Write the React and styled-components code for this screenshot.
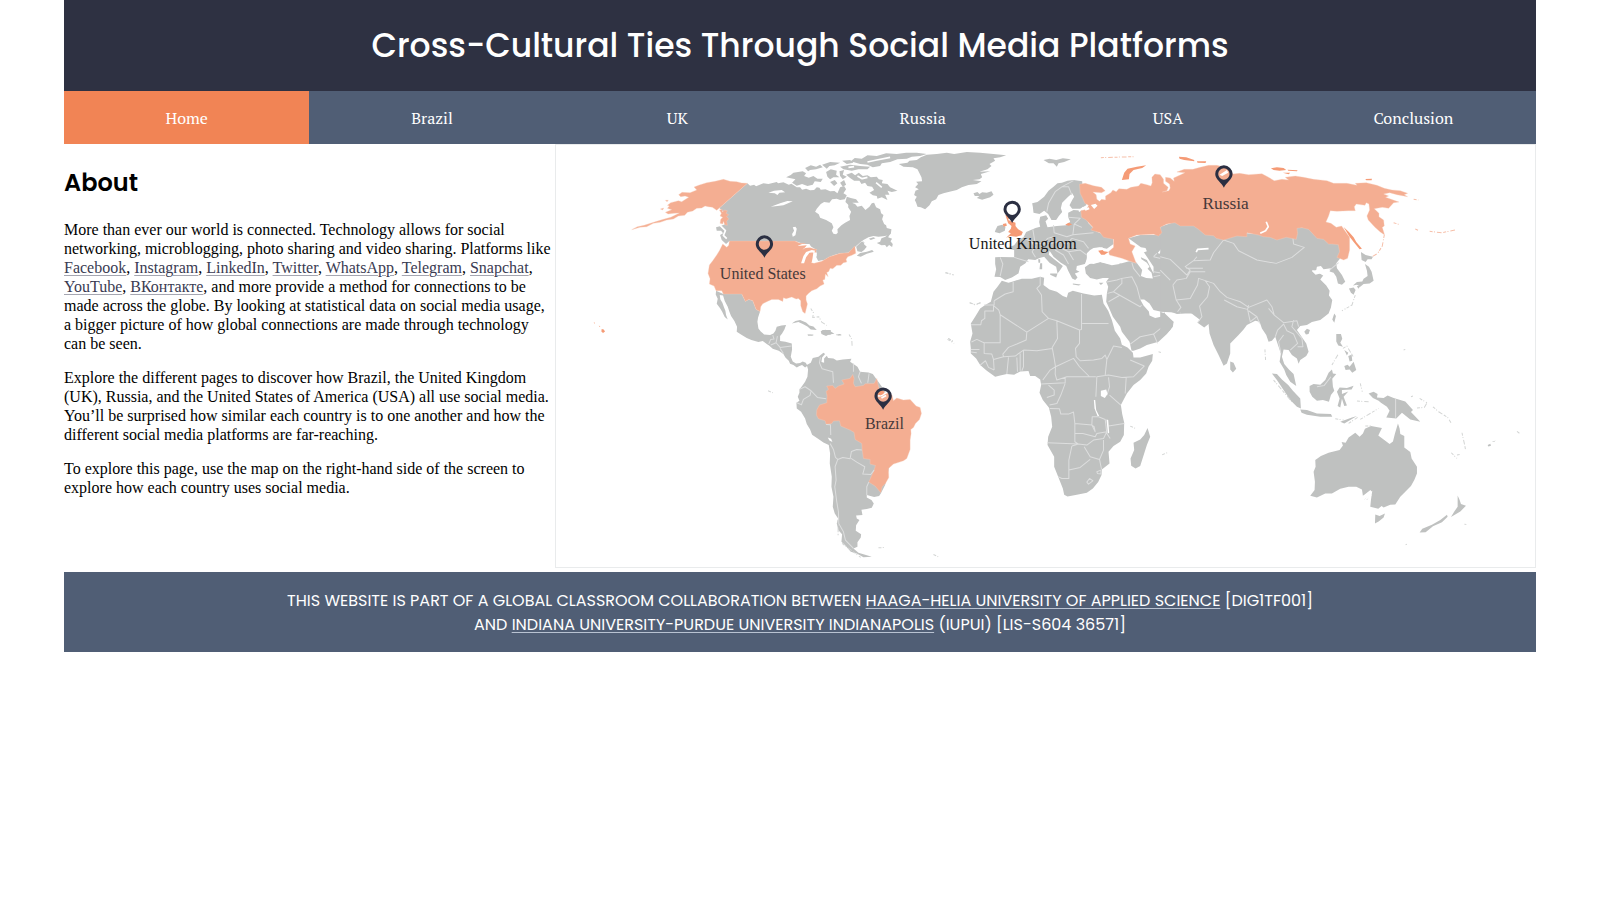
import React from "react";
import styled, { createGlobalStyle } from "styled-components";

const GlobalStyle = createGlobalStyle`
  *, *::before, *::after { box-sizing: border-box; }
  body {
    margin: 0;
    background: #ffffff;
    color: #000000;
    font-family: "Liberation Serif", "Times New Roman", serif;
    font-size: 16px;
  }
`;

const display = `Poppins, Inter, "Open Sans", sans-serif`;

const Page = styled.div`
  width: 92%;
  margin: 0 auto;
`;

const Header = styled.header`
  background: #2e3142;
  color: #ffffff;
  padding: 21px 16px 20px;
  text-align: center;
`;

const Title = styled.h1`
  margin: 0;
  font-family: ${display};
  font-size: 33px;
  font-weight: 500;
  line-height: 50px;
`;

const Nav = styled.nav`
  display: grid;
  grid-template-columns: repeat(6, 1fr);
  background: #505e75;
`;

const NavLink = styled.a`
  padding: 17px 8px 15px;
  background: ${(p) => (p.$active ? "#f18455" : "transparent")};
  color: #ffffff;
  font-family: "PT Serif", "Noto Serif", "Liberation Serif", serif;
  font-size: 16px;
  line-height: 21px;
  text-align: center;
  text-decoration: none;
`;

const Main = styled.main`
  display: grid;
  grid-template-columns: 1fr 2fr;
  padding-bottom: 4px;
`;

const About = styled.section`
  padding: 20px 4px 0 0;
`;

const Heading = styled.h2`
  margin: 0 0 18px;
  font-family: ${display};
  font-size: 24px;
  font-weight: 600;
  line-height: 38px;
`;

const Paragraph = styled.p`
  margin: 0 0 15px;
  line-height: 19px;
`;

const TextLink = styled.a`
  color: ${(p) => (p.$light ? "#ffffff" : "#3a3b52")};
  text-decoration: underline;
  text-decoration-color: ${(p) => (p.$light ? "#b9c3d2" : "#a5a6b1")};
  text-decoration-thickness: 1px;
  text-underline-offset: 2px;
`;

const MapFrame = styled.div`
  border: 1px solid #e9ebec;
`;

const MapSvg = styled.svg`
  display: block;
  width: 100%;
  height: auto;
`;

const Land = styled.path`
  fill: #bfc1c0;
`;

const Featured = styled.path`
  fill: ${(p) => (p.$strong ? "#f59b76" : "#f4ae92")};
  stroke: ${(p) => (p.$strong ? "none" : "#f8cdbc")};
  stroke-width: 1;
`;

const Water = styled.path`
  fill: #ffffff;
`;

const Border = styled.path`
  fill: none;
  stroke: #dddede;
  stroke-width: 3;
  stroke-linejoin: round;
`;

const Isles = styled.path`
  fill: none;
  stroke: ${(p) => (p.$orange ? "#f6bfa9" : "#d3d5d4")};
  stroke-width: 3;
  stroke-dasharray: 9 4 3 6 14 5;
`;

const Inlet = styled.path`
  fill: none;
  stroke: #ffffff;
  stroke-width: 5;
  stroke-linejoin: round;
`;

const PinShape = styled.path`
  fill: #2b2f42;
  fill-rule: evenodd;
`;

const PinLabel = styled.text`
  fill: ${(p) => (p.$dark ? "#161616" : "#46393a")};
  font-family: "Liberation Serif", "Times New Roman", serif;
  font-size: ${(p) => (p.$large ? "52px" : "48px")};
  text-anchor: middle;
`;

const Footer = styled.footer`
  background: #505e75;
  color: #ffffff;
  padding: 17px 16px 15px;
  font-family: ${display};
  font-size: 16px;
  line-height: 24px;
  text-align: center;
  text-transform: uppercase;
`;

function Pin({ x, y, labelX, labelY, name, dark, large }) {
  return (
    <a href={"#" + name.toLowerCase().replace(" ", "-")}>
      <PinShape
        transform={`translate(${x} ${y})`}
        d="M0 0C-6 -15 -26 -24 -26 -41A26 26 0 0 1 26 -41C26 -24 6 -15 0 0ZM-17 -41A17 17 0 1 0 17 -41A17 17 0 1 0 -17 -41Z"
      />
      <PinLabel x={labelX} y={labelY} $dark={dark} $large={large}>{name}</PinLabel>
    </a>
  );
}

function NorthAmerica() {
  return (
    <g transform="translate(-15 -12)">
      <Land d="M592 130L600 137 612 134 618 139 640 130 655 132 680 126 684 130 700 127 716 134 724 131 740 142 750 142 756 149 768 146 780 151 792 150 800 142 808 143 812 149 826 148 840 154 853 153 862 160 870 142 882 138 888 148 880 160 890 166 884 178 870 180 860 176 846 178 838 188 822 186 812 192 800 206 795 215 806 223 810 233 828 240 845 250 850 262 845 272 850 281 858 283 863 278 862 268 874 256 885 248 900 240 898 228 903 215 894 202 895 192 905 188 915 192 922 200 935 197 946 210 958 200 965 190 972 188 978 202 990 208 993 220 1000 225 996 238 1002 252 1008 256 1010 264 1024 268 1022 282 1005 288 985 290 970 288 955 292 940 300 929 308 918 318 905 330 895 338 870 340 852 345 836 352 822 360 805 362 797 352 800 330 780 318 760 312 735 303 538 303 528 312 515 300 510 285 519 280 513 272 500 272 498 262 512 258 526 252 518 240 530 232 520 215 508 204Z" />
      <Land d="M918 320L932 307 946 302 941 312 950 320 942 330 934 336 922 334ZM920 347L930 339 950 335 966 330 971 335 950 341 932 350ZM980 309L990 305 994 295 1006 290 1015 279 1020 282 1014 292 1026 296 1021 304 1028 312 1026 321 1017 315 1010 322 1005 315 994 316ZM956 296l14 -4 6 3 -14 5z" />
      <Land d="M498 452L520 462 575 462 586 484 596 478 608 482 618 508 630 514 624 532 622 545 625 565 632 574 642 583 660 585 670 580 676 572 680 560 694 556 708 555 703 568 696 580 690 588 690 603 706 605 725 610 726 628 722 650 728 664 738 670 750 669 758 664 767 668 772 677 765 682 756 675 748 678 740 682 730 675 720 671 716 662 706 652 700 642 686 632 668 626 657 616 650 612 638 603 625 606 604 600 590 594 574 584 560 575 561 560 553 543 543 528 538 515 533 500 524 483 519 466 509 465 511 478 517 488 522 502 526 512 528 525 533 538 524 531 516 514 509 503 500 491 503 476 497 463Z" />
      <Land d="M725 550L736 543 750 540 768 547 778 556 790 559 800 570 782 568 772 559 758 552 745 546ZM812 573L826 569 842 574 853 581 836 583 828 588 814 582ZM772 583h16v4h-14zM862 582h10v4h-9z" />
      <Border d="M656 612L662 598 672 597 668 585M662 615L678 608 682 588M678 608L690 622 724 618M690 625L700 640" />
      <Isles d="M782 505L790 518 788 532 806 530 815 546 830 556M897 583L905 598 906 618" />
      <Featured d="M592 130L508 204 500 211 487 202 474 200 465 198 455 204 440 205 428 213 412 217 404 226 385 228 370 237 350 240 330 247 310 250 290 260 270 262 245 269 262 260 282 256 320 244 340 238 362 232 388 219 372 220 354 222 346 217 365 209 352 205 358 198 352 196 362 188 385 182 395 185 416 172 405 168 392 170 386 164 396 157 420 158 440 150 432 141 448 135 470 128 495 124 520 118 540 124 560 125 575 129Z" />
      <Featured d="M508 210l8 -2 2 8 4 -6 10 2 -4 8 8 4 -6 6 6 6 -6 8 2 12 -8 -2 -4 -10 -2 8 -8 -2 2 -12 6 -6 -8 -4 4 -8z" />
      <Featured d="M331 207l10 -3 -3 6zM346 181l9 0 -4 4z" />
      <Featured $strong d="M155 567l6 1 4 6 -6 5 -5 -5zM146 556l5 3 -2 2zM131 547l4 1 -2 3z" />
      <Featured d="M538 303H735L748 309 762 310 776 316 766 322 758 328 770 322 778 322 790 326 800 328 798 340 792 350 784 368 792 370 815 364 838 350 852 346 870 340 895 338 905 328 914 318 917 340 905 346 893 350 888 358 890 366 880 368 872 376 860 376 848 386 840 385 836 394 830 397 834 410 826 402 824 418 818 420 822 432 810 438 800 446 785 452 775 460 768 468 768 480 772 492 768 508 765 520 758 515 752 497 752 482 745 475 738 477 725 471 708 476 700 473 698 484 685 478 665 478 650 485 638 491 632 500 630 514 618 508 608 482 596 478 586 484 575 462 520 462 515 452 498 452 492 438 478 432 480 416 474 400 478 375 488 362 500 345 508 332 518 312 530 322 536 316Z" />
      <Water d="M753 370L760 348 768 336 785 330 796 332 792 337 778 338 768 352 762 370ZM790 336L800 338 800 348 808 352 800 364 790 368 786 364ZM742 318L756 312 778 312 784 322 764 324 770 316Z" />
      <Land d="M797 330L816 336 826 352 812 360 804 362 798 350 804 346Z" />
      <Water d="M655 158L672 152 695 150 705 157 688 158 682 165 674 160ZM662 200L690 190 712 183 728 184 700 196 682 198ZM728 262L736 260 740 266 736 286 728 290 726 282 732 272Z" />
      <Inlet d="M508 254L526 272 520 286 530 296M940 306L955 302 975 305 960 318" />
    </g>
  );
}

function ArcticAndAtlantic() {
  return (
    <g transform="translate(675 -12)">
      <Land d="M18 112L32 105 40 98 68 94 78 100 72 108 86 113 100 108 112 116 128 116 122 126 104 124 98 134 82 138 66 132 50 137 36 128 46 118ZM75 84L92 76 108 80 120 74 128 82 108 88 90 90 84 94ZM126 74L150 66 180 68 164 76 148 78 140 86ZM138 96L152 88 170 92 168 104 178 112 160 112 150 118 142 110ZM178 94L192 90 188 104 200 110 188 118 180 108ZM186 62L210 60 220 68 200 72ZM180 80L210 74 240 78 270 80 262 88 235 88 215 92 190 88ZM212 64L224 54 245 56 262 46 290 48 318 40 350 42 378 38 410 38 440 42 420 48 395 50 380 56 352 58 330 66 305 70 300 78 278 82 262 74 240 72Z" />
      <Land d="M198 104L215 98 225 106 236 98 248 108 262 106 272 112 290 110 296 118 308 120 305 130 322 132 330 142 352 152 335 156 322 152 328 164 315 164 322 180 305 172 292 176 290 168 278 166 268 158 282 150 276 140 262 138 255 128 244 132 238 122 222 122 210 114ZM200 170L212 174 228 178 236 188 218 188 206 196 196 186ZM150 126L164 120 172 130 162 138ZM180 128L192 120 198 134 188 140Z" />
      <Inlet d="M232 108L246 116 262 112M262 66L290 60 330 52M288 128L305 142M205 82L222 80" />
      <Land d="M356 72L382 68 388 62 410 60 422 52 440 44 470 42 500 38 522 42 560 36 600 38 640 42 678 46 660 52 640 55 645 62 628 72 634 78 622 88 598 95 630 94 602 102 606 112 598 118 578 120 604 124 590 132 565 135 545 142 530 150 508 155 490 160 475 165 468 178 455 184 448 196 435 208 422 202 412 200 408 188 404 180 410 170 402 165 406 152 416 148 405 142 414 132 408 125 426 124 424 112 418 100 412 88 398 82 370 80Z" />
      <Land d="M580 160L592 156 598 162 606 157 620 158 634 154 640 164 630 172 606 179 590 174 598 168 584 168Z" />
      <Isles d="M497 397L520 405M570 488L584 494 600 488M505 595L520 608" />
    </g>
  );
}

function SouthAmerica() {
  return (
    <g transform="translate(405 558)">
      <Land d="M350 105L362 98 368 84 385 80 400 68 405 72 396 82 394 96 402 98 402 85 410 77 414 84 430 85 440 91 458 88 484 86 480 95 490 102 502 110 510 125 535 127 548 132 556 143 640 260 600 400 585 465 572 490 567 498 552 501 530 495 530 502 544 510 551 520 545 533 530 537 514 539 517 555 498 556 500 565 508 570 498 585 497 602 513 612 512 622 502 636 502 650 490 655 505 668 525 674 545 680 520 681 500 670 482 665 465 645 454 635 456 612 445 600 440 580 444 565 434 550 428 530 430 500 424 470 425 440 419 400 420 370 416 345 400 337 385 327 366 314 360 298 350 282 345 265 333 245 320 235 319 218 328 212 323 200 328 188 328 178 336 168 345 155 352 140 354 118Z" />
      <Featured d="M560 145L552 160 525 161 520 166 495 170 490 160 492 145 488 133 480 145 455 150 462 162 445 168 435 175 428 166 410 168 415 178 408 184 411 198 410 218 388 225 380 240 379 255 385 266 405 272 408 283 425 280 430 273 448 272 452 288 480 300 492 307 495 328 515 340 516 358 520 385 540 388 540 402 556 406 552 420 536 456 555 468 572 488 576 470 586 460 596 442 595 415 610 402 640 392 650 385 660 358 660 330 663 310 662 298 670 292 676 280 688 268 694 250 690 232 678 228 660 208 640 210 620 204 610 212 606 196 598 188 570 185 564 164Z" />
      <Border d="M391 82L388 98 396 116 428 125 430 158M328 178L345 170 363 182 360 196 340 208 334 224 320 218M363 182L382 202 408 206M408 283L421 284 422 315M420 340L430 358 436 382 443 388 458 382 480 386 484 364 500 358 515 360M443 388L435 410 438 450 434 470 440 515 445 545 446 580 460 605 466 630 490 655M483 385L500 396 524 410 518 432 542 433 552 420M536 456L530 470 530 495M490 100L490 125M510 125L505 140 514 160M537 130L533 158" />
      <Water d="M413 322l10 4 4 10 -9 -5z" />
      <Inlet d="M564 198L574 196 584 190 596 184M574 204L588 196" />
      <Featured $strong d="M566 187l8 -7 8 4 -2 8 -10 4 -6 -4z" />
      <Isles d="M565 653L586 652M730 673L748 682M234 182L248 188M354 14L372 15M438 14L454 15M444 570L444 615M456 640L512 682" />
      <Land d="M396 0h26v14h-22z" />
    </g>
  );
}

function Africa() {
  return (
    <g transform="translate(1155 378)">
      <Land d="M185 32L205 38 218 34 245 26 275 26 300 20 312 23 310 45 328 58 350 65 368 78 380 82 384 68 398 62 430 70 462 76 485 74 490 100 504 122 515 150 524 182 540 205 545 224 562 232 578 248 580 262 600 262 638 252 636 272 625 290 618 310 600 330 580 345 560 370 542 405 546 432 552 458 551 495 540 515 520 528 505 545 508 580 485 598 484 615 474 636 458 655 440 668 410 674 382 679 372 674 368 655 354 620 342 590 342 560 322 525 324 500 336 470 333 440 326 412 308 390 298 368 303 345 300 328 285 318 270 318 265 303 240 304 222 314 200 312 180 316 165 320 140 302 120 285 108 265 92 250 92 235 90 215 97 190 92 160 105 140 120 115 135 105 152 95 160 65 172 50Z" />
      <Land d="M622 474L630 500 620 525 600 588 586 595 573 587 571 565 582 540 580 518 600 508 612 495Z" />
      <Border d="M219 36L219 65 195 72 162 92M162 92V105H132M162 108H160V123H134V145L124 152 122 164H92M162 108L176 120 180 134 260 186 325 145 350 152 418 180 424 178V72M180 134V218H132L125 215 110 208 94 216M300 20V45L290 55 304 75 306 125 325 145M426 160H505M260 186L258 210 230 222 205 232 188 252 190 260 160 268M350 152L352 205 336 232 342 265 346 290M418 180L418 220 406 235 408 260 420 272 460 270 485 265 495 255 500 268 520 228 545 232M250 240L290 242 336 235M250 240L250 290 245 302M240 250L240 302M230 262L232 305M205 262L200 312M160 268L162 300M120 285L136 272 145 292 162 300M92 238H118M92 246L110 248M132 218L132 250 155 252 160 268M190 260L225 258 250 240M346 290L330 300 308 330M346 290L400 265 418 290 448 320 380 320 350 330 345 312 346 290M303 342L375 338 375 320M325 345L342 360 342 375 320 382M375 340L362 375 350 400 328 405M328 415L358 416 362 432 385 432 400 426 404 460 455 465 465 485 462 470 455 465 456 440 475 440M404 460L404 515 415 522 322 518M395 528L386 570 386 625 365 625 354 620M415 522L395 528M415 522L440 525 460 510 490 505 500 485 470 490 465 500 428 490 404 490M432 530L450 560 478 568 490 540 490 510M386 600L420 592 450 568M478 568L484 598M475 440L495 448 500 490 510 505M505 468L552 460M467 380L470 320 505 315 545 322 580 320 612 288 570 270M467 320L448 320M500 268L495 315M558 322L555 370M505 322L508 350 500 375M508 375L542 405M440 636L448 625 458 632 445 642ZM470 605L482 600 482 612 472 610Z" />
      <Water d="M482 362L498 358 502 372 494 384 482 378ZM461 390L465 390 468 420 477 438 472 438 463 415ZM499 448L504 450 507 488 503 490Z" />
      <Isles d="M24 205L42 215M570 468L588 476M666 554L686 546M655 245L662 247" />
    </g>
  );
}

function Europe() {
  return (
    <g transform="translate(1155 -12)">
      <Land d="M165 352L180 351 222 352 222 330 210 328 195 325 222 316 232 302 250 292 258 276 272 270 286 264 300 260 297 246 300 230 318 226 324 236 316 244 322 262 350 258 378 256 390 245 384 232 384 218 400 210 430 212 445 250 470 275 518 295 520 312 500 326 478 322 460 324 450 330 440 340 440 358 434 372 410 378 408 390 418 395 404 400 412 412 405 420 396 415 384 392 378 378 362 368 340 350 328 332 326 344 345 360 368 378 360 390 352 400 348 380 328 368 312 350 298 354 285 360 264 358 256 370 240 380 235 400 215 412 195 420 180 411 163 410 168 388 165 372Z" />
      <Land d="M278 200L276 190 292 186 312 170 325 152 340 140 352 130 365 128 382 122 400 120 426 124 428 160 440 180 438 196 420 206 396 206 388 196 396 180 402 170 396 160 384 170 366 188 362 205 366 216 356 228 348 240 334 240 324 222 312 212 298 222 280 218Z" />
      <Land d="M310 60L328 56 348 60 368 55 392 58 372 66 355 70 350 80 340 70 326 70ZM166 270L172 258 186 254 196 260 194 272 178 280 164 276ZM300 370h6v18h-8zM330 400l22 0 -4 12 -18 -8zM294 358h6v10h-5zM398 430l24 3 -6 3 -18 -3zM476 428l14 0 -8 7z" />
      <Land d="M434 382L448 372 480 366 510 372 545 370 572 362 590 370 602 352 620 360 640 400 640 380 600 320 565 295 600 285 660 285 665 265 700 250 790 260 790 520 735 520 710 522 690 514 675 512 660 514 640 510 628 490 612 478 600 478 610 496 626 514 628 526 645 534 662 530 672 516 678 530 700 546 698 560 680 582 655 605 620 615 600 625 580 632 574 632 568 605 545 575 540 560 518 530 505 500 498 485 500 460 504 440 498 425 506 414 488 414 470 418 450 414 437 400Z" />
      <Featured $strong d="M196 226L202 220 208 232 204 240 218 245 226 248 226 258 234 268 248 276 244 286 228 290 210 288 198 293 212 280 204 276 212 266 214 258 204 250ZM188 252L198 250 200 257 190 260ZM375 254L385 248 396 253 386 257ZM545 120L552 98 562 86 590 80 618 76 606 84 580 90 568 102 566 118Z" />
      <Isles $orange d="M482 53L580 50" />
      <Border d="M180 352L188 372 180 408M222 352L265 365M250 292L272 305 285 320 276 335 286 352M278 268L285 310 312 312 322 295 340 290M340 255L342 278 380 290 398 284 402 252M285 310L270 305M322 312L355 305 380 312 395 295M395 295L430 305 445 325M355 305L355 320 385 335 400 360M345 330L370 345 385 372M385 335L420 330 440 345M398 284L460 278M402 252L420 235 384 232M402 252L425 262M320 215L325 190 345 155 366 140 385 140 395 165M366 140L400 122M500 426L530 420 545 415 575 410 590 440 600 478M545 415L545 430 520 455 502 460M520 455L600 500 604 495M505 485L540 465M575 368L580 385 600 410M565 362L600 370M640 410L680 402 705 415 750 400 780 395M705 415L695 440 710 480 725 500 720 520M640 395L680 402M570 612L600 590 640 582 668 560 668 535M640 582L652 610M640 350L680 360 720 370 760 385M650 340L640 350" />
      <Water d="M576 328L592 320 616 324 620 334 598 342 604 358 620 368 628 380 622 386 634 398 638 415 618 414 602 408 606 390 592 372 580 350ZM438 366L442 345 454 334 470 324 486 322 500 334 515 350 536 362 538 372 515 376 480 366 460 372Z" />
      <Featured $strong d="M474 332l13 -2 4 4 14 2 -12 8 -10 0z" />
      <Inlet d="M655 340L665 328 675 332M416 214L430 202" />
      <Isles d="M15 398L40 404M88 488L106 494 122 488M22 598L42 610" />
    </g>
  );
}

function Asia() {
  return (
    <g transform="translate(1815 228)">
      <Land d="M0 20L60 0 130 30 190 50 260 40 400 50 405 20 445 25 500 60 540 75 540 115 528 130 530 145 545 165 555 185 545 194 533 190 528 170 520 158 508 154 512 145 490 148 482 138 470 140 468 150 456 154 466 164 480 160 490 165 480 178 498 196 508 212 506 226 516 240 512 262 505 280 480 300 455 306 440 315 420 318 410 330 424 350 438 370 445 395 438 408 420 420 415 431 410 415 395 405 385 390 370 388 365 410 372 432 386 448 400 462 408 498 390 485 378 465 372 448 358 425 362 400 355 380 345 350 335 362 325 365 318 345 305 325 298 305 285 302 260 315 250 328 235 345 210 370 210 400 200 430 190 437 175 405 160 375 148 340 145 312 132 322 112 308 120 300 100 285 88 275 60 278 0 275Z" />
      <Land d="M0 275L14 280 40 305 30 330 0 355ZM210 424L220 428 228 446 218 457 210 448ZM432 335l8 -9 9 4 -4 12 -8 1zM522 280L527 288 522 308 516 298ZM602 96L616 105 638 110 634 118 622 118 616 126 604 120ZM614 132L626 140 634 155 640 182 628 190 610 192 600 200 590 194 578 196 590 186 606 184 610 176 622 168 620 152ZM566 205L580 202 586 210 580 224 572 218ZM590 198l12 -2 -8 10z" />
      <Land d="M528 342L542 342 546 356 540 368 548 380 534 376 528 364ZM552 438L562 434 568 440 580 425 588 450 576 458 568 448 556 450ZM552 390l12 8 -4 8zM564 408l10 -4 2 18 -8 2zM335 460L350 462 365 478 384 495 398 512 420 535 422 565 410 560 390 540 370 510 350 480ZM420 568L440 570 470 580 512 582 516 590 480 590 440 584 424 578ZM448 498L460 492 480 494 495 480 505 458 515 448 518 460 528 462 516 476 518 500 522 512 512 525 506 545 488 540 470 542 456 530 448 515ZM530 515L538 502 560 504 580 497 574 508 545 510 545 522 564 514 550 530 560 556 552 558 545 536 540 562 532 558 538 535ZM540 605L575 592 590 588 570 600 552 610ZM625 520L640 515 652 522 650 532 670 534 682 526 700 534 735 544 758 570 752 576 780 605 750 598 725 578 708 595 678 592 688 572 680 560 662 548 655 542 638 534Z" />
      <Border d="M0 110L30 118 80 165 90 150 75 140 100 122 150 120 160 98 190 60 220 70 235 92 290 120 348 130 395 112 432 82 400 72 398 55M30 180L0 150M38 195L50 180 78 175 90 155 135 155M48 240L38 195M48 240L90 235 112 195 115 175 160 190 180 215 200 232 240 245 265 262 320 240 335 260 342 285 370 308 410 302 415 320M48 240L62 262 52 275M135 182L148 200 142 230 118 258 125 290 112 308M192 240L230 260 262 268 265 255M262 268L270 305 290 290 265 272M290 290L298 310M342 285L325 265M345 350L352 330 370 312 380 332 400 342 412 370 390 390M370 345L355 365 362 400M400 300L395 320 425 355 428 380 412 380M508 150L535 128M470 500L492 496 512 470M706 536V593M78 145L128 145M100 122L110 110" />
      <Inlet d="M108 96L112 88 145 86M302 38L318 28 320 16 312 5M456 152L480 158 492 166" />
      <Isles d="M314 388L316 420M585 225L575 255 545 272M340 480L395 545M515 435L535 400M600 490L606 515M590 543L625 545M525 596L550 600M548 385L560 378 580 412M565 610L592 592M735 388L730 390" />
      <Isles d="M600 598L655 565" />
    </g>
  );
}

function Russia() {
  return (
    <g transform="translate(1875 -12)">
      <Featured d="M-302 133L-285 130 -260 137 -236 142 -225 152 -236 158 -262 156 -252 164 -250 178 -242 184 -236 178 -224 180 -224 168 -208 158 -202 150 -192 155 -184 146 -160 148 -148 142 -125 138 -118 130 -100 134 -88 138 -84 128 -85 112 -76 102 -60 104 -50 118 -50 130 -36 142 -40 152 -54 156 -34 152 -30 144 -32 132 -44 124 -44 112 -30 114 -18 124 -20 114 -2 106 14 98 -10 96 12 88 38 88 60 82 85 76 110 76 128 80 150 88 158 102 178 100 205 104 245 101 262 110 282 122 305 118 325 120 315 112 345 108 370 112 400 118 440 122 460 130 500 130 530 136 525 130 558 128 590 136 612 145 635 150 660 152 682 160 672 164 682 170 650 164 628 158 610 162 625 168 616 172 656 186 640 188 625 205 606 202 582 206 596 220 596 230 610 240 612 258 606 262 613 285 600 276 584 262 564 240 560 228 568 210 566 192 558 188 554 196 528 192 522 200 525 212 505 212 470 214 450 212 445 228 437 246 452 250 468 262 484 258 496 275 508 292 508 330 502 355 490 360 470 352 478 335 474 314 455 312 445 312 430 298 410 295 385 268 365 263 350 265 352 280 348 298 318 292 290 300 270 292 250 290 235 285 200 278 200 290 170 288 130 300 108 295 100 287 75 285 55 268 40 258 0 258 -16 248 -40 252 -60 262 -55 278 -65 288 -80 283 -130 285 -155 295 -150 312 -135 318 -145 335 -132 370 -155 362 -175 355 -212 345 -215 335 -200 322 -200 298 -230 292 -240 278 -268 270 -262 262 -282 240 -296 232 -298 212 -280 208 -275 196 -286 190 -292 176 -300 160Z" />
      <Water d="M-268 195l14 -4 6 6 -10 10zM-286 208l12 -6 2 6 -12 4zM118 104L140 90 144 98 126 108Z" />
      <Featured $strong d="M-4 50L18 52 42 60 42 64 12 60 -2 56ZM50 64L78 64 76 69 52 68ZM272 85L290 82 310 84 318 90 298 92 280 90ZM322 89L352 91 350 94 324 92ZM308 98L330 98 325 103ZM555 117L575 116 574 121 558 121ZM490 261L506 276 520 292 528 306 545 326 538 328 522 308 508 290Z" />
      <Inlet d="M240 280L256 272 264 260 258 245" />
      <Isles $orange d="M612 285L606 318 592 340 576 350M640 248L658 254M705 267L716 272M748 274L785 278 825 270M700 178L714 180" />
    </g>
  );
}

function Oceania() {
  return (
    <g transform="translate(2085 678)">
      <Land d="M443 160L448 175 450 192 462 198 462 232 480 246 484 265 500 290 500 310 492 330 482 348 465 365 450 380 435 403 420 404 400 412 394 408 384 416 360 410 362 390 366 362 350 372 338 378 335 358 318 350 295 350 270 356 245 370 225 370 200 382 180 377 193 360 194 335 190 305 196 290 195 270 212 258 235 248 268 240 278 226 274 216 286 218 295 202 315 188 328 200 338 190 344 176 362 168 395 174 384 196 400 208 418 222 428 214 434 190Z" />
      <Land d="M375 433L388 438 404 430 400 442 385 454 374 460ZM622 376L628 390 632 402 647 407 630 424 602 441 612 424 622 410ZM590 434L592 440 575 456 548 468 526 486 508 487 516 476 545 464 570 450ZM712 225l8 -4 2 6 -8 2zM724 216l12 -5 -4 4zM342 388l16 -10 -8 12z" />
      <Inlet d="M336 382L362 362M344 390L362 374" />
      <Isles d="M603 248L620 265M548 110L565 125 592 142 602 158M635 188L642 220 646 240M800 184L808 190M500 114L522 112 530 98M508 85L530 98M620 255L628 253M642 462L648 463M345 168L366 167M466 524L470 522M482 80L488 78" />
    </g>
  );
}

function WorldMap() {
  return (
    <MapSvg viewBox="3 3 2937 1266" role="img" aria-label="World map of the countries covered">
      <Africa />
      <Europe />
      <Asia />
      <Russia />
      <ArcticAndAtlantic />
      <NorthAmerica />
      <SouthAmerica />
      <Oceania />
      <Pin x={628} y={341} labelX={623} labelY={406} name="United States" />
      <Pin x={1371} y={237} labelX={1403} labelY={316} name="United Kingdom" dark />
      <Pin x={2006} y={131} labelX={2011} labelY={195} name="Russia" large />
      <Pin x={984} y={797} labelX={988} labelY={855} name="Brazil" />
    </MapSvg>
  );
}

const pages = ["Home", "Brazil", "UK", "Russia", "USA", "Conclusion"];
const platforms = ["Facebook", "Instagram", "LinkedIn", "Twitter", "WhatsApp", "Telegram", "Snapchat", "YouTube", "ВКонтакте"];

export default function App() {
  return (
    <>
      <GlobalStyle />
      <Page>
        <Header>
          <Title>Cross-Cultural Ties Through Social Media Platforms</Title>
        </Header>
        <Nav>
          {pages.map((page, i) => (
            <NavLink key={page} href={"#" + page.toLowerCase()} $active={i === 0}>{page}</NavLink>
          ))}
        </Nav>
        <Main>
          <About>
            <Heading>About</Heading>
            <Paragraph>
              More than ever our world is connected. Technology allows for social networking, microblogging, photo
              sharing and video sharing. Platforms like{" "}
              {platforms.map((name) => (
                <React.Fragment key={name}>
                  <TextLink href={"#" + name}>{name}</TextLink>,{" "}
                </React.Fragment>
              ))}
              and more provide a method for connections to be made across the globe. By looking at statistical data on
              social media usage, a bigger picture of how global connections are made through technology can be seen.
            </Paragraph>
            <Paragraph>
              Explore the different pages to discover how Brazil, the United Kingdom (UK), Russia, and the United
              States of America (USA) all use social media. You’ll be surprised how similar each country is to one
              another and how the different social media platforms are far-reaching.
            </Paragraph>
            <Paragraph>
              To explore this page, use the map on the right-hand side of the screen to explore how each country uses
              social media.
            </Paragraph>
          </About>
          <MapFrame>
            <WorldMap />
          </MapFrame>
        </Main>
        <Footer>
          This website is part of a global classroom collaboration between{" "}
          <TextLink $light href="#haaga-helia">Haaga-Helia University of Applied Science</TextLink> [DIG1TF001]
          <br />
          and <TextLink $light href="#iupui">Indiana University-Purdue University Indianapolis</TextLink> (IUPUI)
          [LIS-S604 36571]
        </Footer>
      </Page>
    </>
  );
}
